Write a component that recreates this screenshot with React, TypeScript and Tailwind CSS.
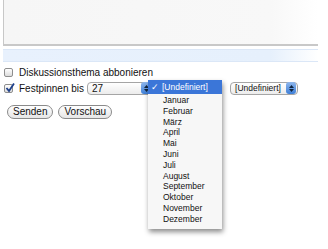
import React from 'react';

const months = [
  'Januar', 'Februar', 'März', 'April', 'Mai', 'Juni',
  'Juli', 'August', 'September', 'Oktober', 'November', 'Dezember',
];

function Stepper() {
  return (
    <span className="flex h-[12px] w-[10px] shrink-0 flex-col items-center justify-center gap-[1px] rounded-[3px] bg-gradient-to-b from-[#8fb7ec] to-[#3d7fd8]">
      <svg width="5" height="3" viewBox="0 0 5 3"><path d="M2.5 0 L5 3 L0 3 Z" fill="#10253f" /></svg>
      <svg width="5" height="3" viewBox="0 0 5 3"><path d="M0 0 L5 0 L2.5 3 Z" fill="#10253f" /></svg>
    </span>
  );
}

function Checkbox({ checked }: { checked?: boolean }) {
  return (
    <span className="relative flex h-[9px] w-[9px] shrink-0 items-center justify-center rounded-[2px] border border-[#8e8e8e] bg-gradient-to-b from-[#ffffff] to-[#dcdcdc]">
      {checked && (
        <svg className="absolute -top-[2px] left-0" width="10" height="10" viewBox="0 0 10 10">
          <path d="M1.5 5 L4 8 L9 0.5" fill="none" stroke="#1d3f8a" strokeWidth="1.8" />
        </svg>
      )}
    </span>
  );
}

export default function App() {
  return (
    <div className="relative h-[249px] w-[328px] overflow-hidden bg-white text-[10px] text-[#111] [font-family:'Liberation_Sans',Arial,sans-serif]">
      <div className="ml-[3px] h-[46px] w-[315px] border-b-2 border-l border-[#c8c8c8] bg-gradient-to-r from-[#f6f6f6] via-[#f8f8f8] via-85% to-white" />
      <div className="ml-[3px] mt-[3px] h-[13px] w-[315px] border-y border-[#dbe7f7] bg-gradient-to-r from-[#e8f1fd] via-[#e6f0fc] via-85% to-white" />

      <div className="mt-[3px] flex h-[14px] items-center gap-[6px] pl-[4px]">
        <Checkbox />
        <span>Diskussionsthema abbonieren</span>
      </div>

      <div className="mt-[2px] flex h-[14px] items-center pl-[4px]">
        <Checkbox checked />
        <span className="ml-[6px]">Festpinnen bis</span>
        <div className="ml-[3px] flex h-[13px] w-[66px] items-center justify-between rounded-[4px] border border-[#a5a5a5] bg-gradient-to-b from-white to-[#ececec] pl-[4px] pr-[1px]">
          <span>27</span>
          <Stepper />
        </div>
        <div className="ml-[77px] flex h-[13px] w-[68px] items-center justify-between rounded-[4px] border border-[#a5a5a5] bg-gradient-to-b from-white to-[#ececec] pl-[4px] pr-[1px] text-[8.5px]">
          <span>[Undefiniert]</span>
          <Stepper />
        </div>
      </div>

      <div className="mt-[10px] flex gap-[5px] pl-[7px]">
        <button className="h-[14px] rounded-full border border-[#8a8a8a] bg-gradient-to-b from-white to-[#e6e6e6] px-[5px] leading-[12px]">Senden</button>
        <button className="h-[14px] rounded-full border border-[#8a8a8a] bg-gradient-to-b from-white to-[#e6e6e6] px-[5px] leading-[12px]">Vorschau</button>
      </div>

      <div className="absolute left-[148px] top-[80px] w-[74px] bg-[#f7f7f7] pb-[4px] text-[8.5px] shadow-[1px_3px_5px_rgba(0,0,0,0.45)]">
        <div className="flex h-[14px] items-center bg-[#3b76d8] text-white">
          <span className="w-[14px] text-center">✓</span>
          <span>[Undefiniert]</span>
        </div>
        <div className="mt-[1px] flex flex-col">
          {months.map((m) => (
            <div key={m} className="flex h-[10.8px] items-center pl-[15px]">{m}</div>
          ))}
        </div>
      </div>
    </div>
  );
}
